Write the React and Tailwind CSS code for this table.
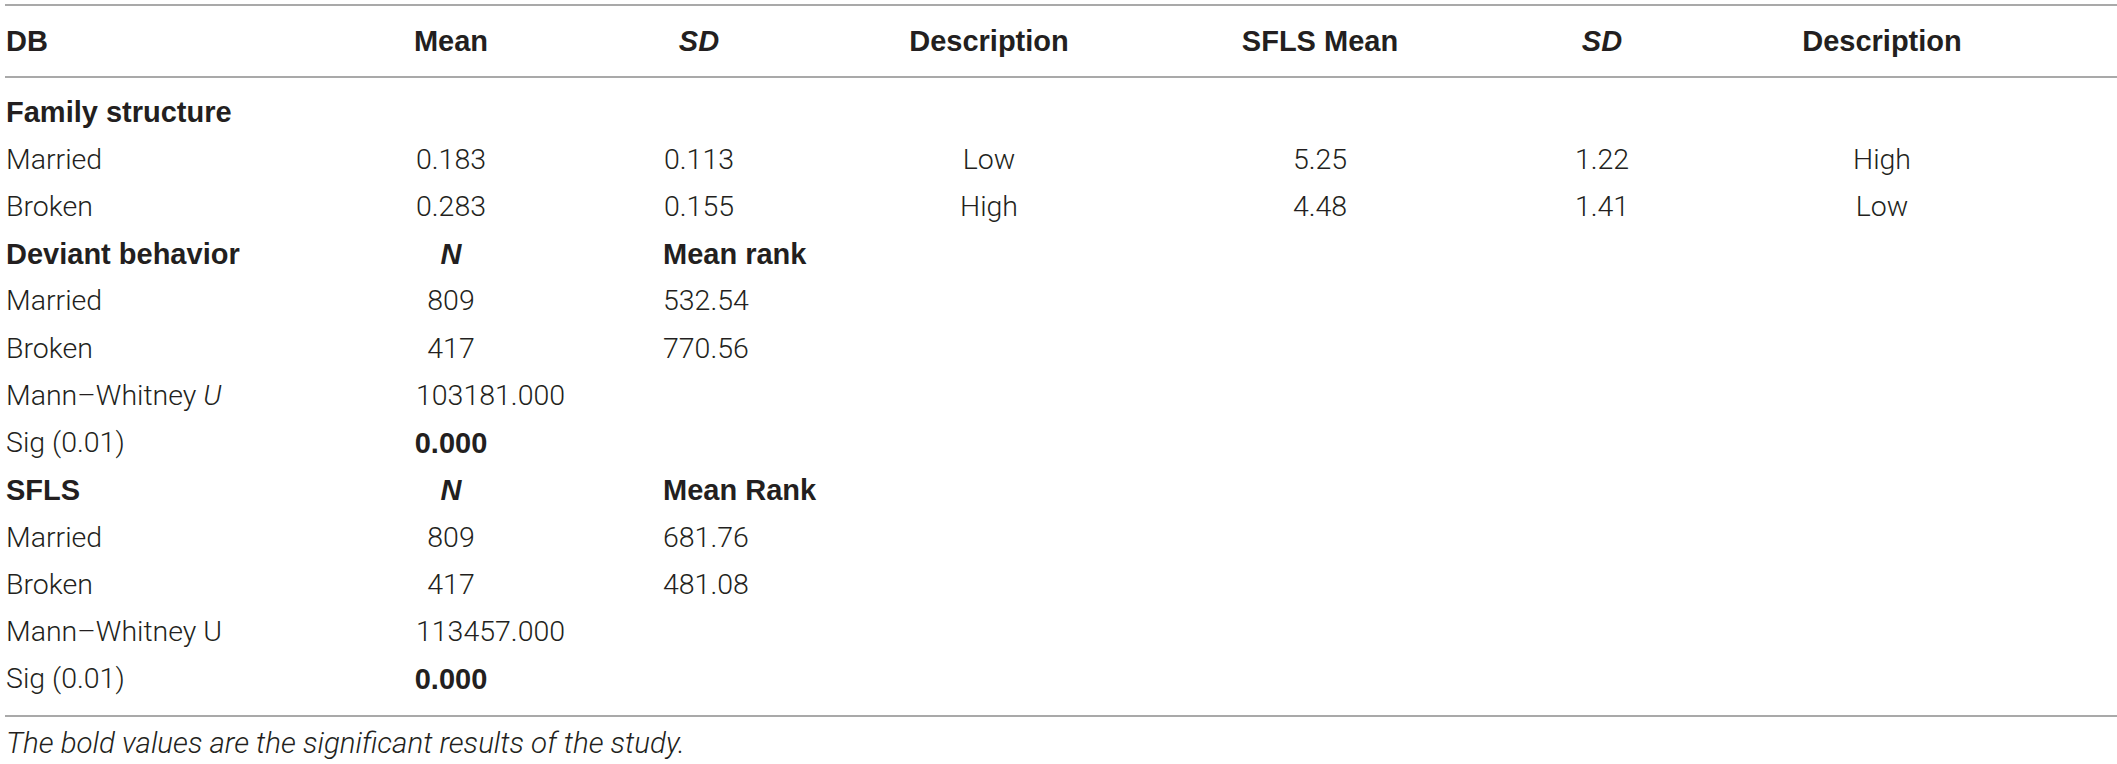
import React from "react";

const REG = "font-['Roboto','Liberation_Sans',sans-serif] font-light";
const BOLD = "font-['Liberation_Sans','Arial',sans-serif] font-bold text-[29px]";

function C({ children, kind = "c", b = false, i = false }) {
  // kind: l = first column left, c = centered, l2 = left in col2, l3 = left in col3
  const align =
    kind === "l"
      ? "justify-start pl-[1px]"
      : kind === "l2"
      ? "justify-start pl-[36px]"
      : kind === "l3"
      ? "justify-start pl-[141px]"
      : "justify-center";
  return (
    <div className={`flex items-center whitespace-nowrap ${align} ${b ? BOLD : REG} ${i ? "italic" : ""}`}>
      {children}
    </div>
  );
}

function Row({ children, header = false }) {
  return (
    <div
      className={`grid grid-cols-[375px_142px_354px_226px_436px_128px_432px] ${
        header ? "h-[70px]" : "h-[47.25px]"
      }`}
    >
      {children}
    </div>
  );
}

export default function App() {
  return (
    <div className="w-[2117px] h-[764px] bg-white text-[#231f20] text-[28.5px] leading-none pl-[5px] pt-[4px] overflow-hidden">
      <div className="h-[2px] bg-[#a9a9a9]" />
      <Row header>
        <C kind="l" b>DB</C>
        <C b>Mean</C>
        <C b i>SD</C>
        <C b>Description</C>
        <C b>SFLS Mean</C>
        <C b i>SD</C>
        <C b>Description</C>
      </Row>
      <div className="h-[2px] bg-[#a9a9a9]" />
      <div className="pt-[11px]">
        <Row>
          <C kind="l" b>Family structure</C>
        </Row>
        <Row>
          <C kind="l">Married</C>
          <C>0.183</C>
          <C>0.113</C>
          <C>Low</C>
          <C>5.25</C>
          <C>1.22</C>
          <C>High</C>
        </Row>
        <Row>
          <C kind="l">Broken</C>
          <C>0.283</C>
          <C>0.155</C>
          <C>High</C>
          <C>4.48</C>
          <C>1.41</C>
          <C>Low</C>
        </Row>
        <Row>
          <C kind="l" b>Deviant behavior</C>
          <C b i>N</C>
          <C kind="l3" b>Mean rank</C>
        </Row>
        <Row>
          <C kind="l">Married</C>
          <C>809</C>
          <C kind="l3">532.54</C>
        </Row>
        <Row>
          <C kind="l">Broken</C>
          <C>417</C>
          <C kind="l3">770.56</C>
        </Row>
        <Row>
          <C kind="l">
            Mann–Whitney&nbsp;<span className="italic">U</span>
          </C>
          <C kind="l2">103181.000</C>
        </Row>
        <Row>
          <C kind="l">Sig (0.01)</C>
          <C b>0.000</C>
        </Row>
        <Row>
          <C kind="l" b>SFLS</C>
          <C b i>N</C>
          <C kind="l3" b>Mean Rank</C>
        </Row>
        <Row>
          <C kind="l">Married</C>
          <C>809</C>
          <C kind="l3">681.76</C>
        </Row>
        <Row>
          <C kind="l">Broken</C>
          <C>417</C>
          <C kind="l3">481.08</C>
        </Row>
        <Row>
          <C kind="l">Mann–Whitney U</C>
          <C kind="l2">113457.000</C>
        </Row>
        <Row>
          <C kind="l">Sig (0.01)</C>
          <C b>0.000</C>
        </Row>
      </div>
      <div className="mt-[12px] h-[2px] bg-[#a9a9a9]" />
      <div className={`mt-[10px] pl-[1px] leading-[32px] italic text-[29.5px] ${REG}`}>
        The bold values are the significant results of the study.
      </div>
    </div>
  );
}
